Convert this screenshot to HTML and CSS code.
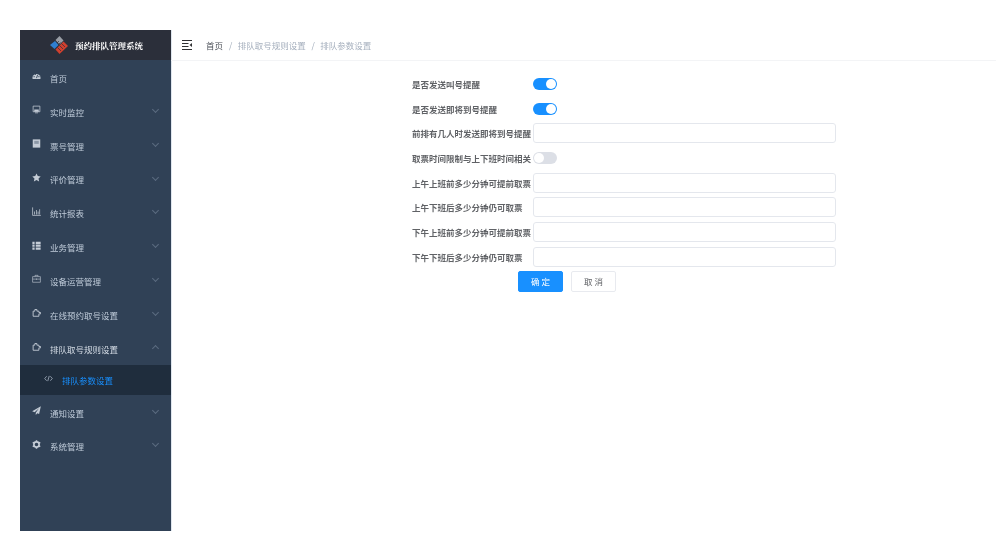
FILE: index.html
```html
<!DOCTYPE html>
<html lang="zh">
<head>
<meta charset="utf-8">
<title>排队参数设置</title>
<link rel="stylesheet" href="styles.css">
</head>
<body>
<div class="app">
  <aside class="sidebar">
    <div class="brand">
      <svg class="logo" viewBox="0 0 20 20"><path d="M10.500 1l4 4.500-4 4-4-4.500z" fill="#9a9ea6"/><path d="M6 6l3.500 4L5.500 14 1 10z" fill="#2f7fd0"/><path d="M6.500 14.500L14.500 6.500 19 11 10.500 19z" fill="#d0402e"/><path d="M8.500 12.500l3.500 3.500M10.500 10.500l3.500 3.500M12.500 8.500l3.500 3.500M8 8l2-2M9.500 9.500l2-2" stroke="#2b2f3a" stroke-width=".7"/></svg>
      <span class="brand-name">预约排队管理系统</span>
    </div>
    <nav class="menu">
      <a class="item"><svg class="ico" viewBox="0 0 12 12"><path d="M.5 9.500a5.500 5.500 0 0 1 11 0c0 .6-.4 1-1 1h-9c-.6 0-1-.4-1-1z" fill="currentColor"/><path d="M6 9.500L7.500 5" stroke="#304156" stroke-width="1.200"/><circle cx="2.800" cy="7.500" r=".8" fill="#304156"/><circle cx="9.200" cy="7.500" r=".8" fill="#304156"/><circle cx="4.500" cy="4.500" r=".7" fill="#304156"/></svg><span class="lbl">首页</span></a>
      <a class="item"><svg class="ico" viewBox="0 0 12 12"><path d="M1.500 1.500h9v7.500h-9z" fill="none" stroke="currentColor"/><path d="M3 6h6v3H3zM4 10h4v1H4z" fill="currentColor"/></svg><span class="lbl">实时监控</span><i class="chev"></i></a>
      <a class="item"><svg class="ico" viewBox="0 0 12 12"><path d="M1 .5h10v11H1z" fill="currentColor"/><path d="M3 2.500h6v4H3z" fill="#8b97a6"/></svg><span class="lbl">票号管理</span><i class="chev"></i></a>
      <a class="item"><svg class="ico" viewBox="0 0 12 12"><path d="M6 .5l1.700 3.600 3.900.5-2.900 2.700.8 3.900L6 9.300l-3.500 1.900.8-3.900L.4 4.600l3.900-.5z" fill="currentColor"/></svg><span class="lbl">评价管理</span><i class="chev"></i></a>
      <a class="item"><svg class="ico" viewBox="0 0 12 12"><path d="M.8 .5v10.700h11" fill="none" stroke="currentColor"/><path d="M3 6h1v4H3zM5.300 4h1v6h-1zM7.600 6h1v4h-1zM9.800 3h1v7h-1z" fill="currentColor"/></svg><span class="lbl">统计报表</span><i class="chev"></i></a>
      <a class="item"><svg class="ico" viewBox="0 0 12 12"><path d="M.5 1h3v3h-3zM.5 4.800h3v3h-3zM.5 8.500h3v3h-3zM5 1h6.500v3H5zM5 4.800h6.500v3H5zM5 8.500h6.500v3H5z" fill="currentColor"/></svg><span class="lbl">业务管理</span><i class="chev"></i></a>
      <a class="item"><svg class="ico" viewBox="0 0 12 12"><path d="M.8 3.500h10.400v7.500H.8zM4 3.500V1.800h4v1.700M.8 6.800h10.400M6 6v1.800" fill="none" stroke="currentColor" stroke-width=".8"/></svg><span class="lbl">设备运营管理</span><i class="chev"></i></a>
      <a class="item"><svg class="ico" viewBox="0 0 12 12"><path d="M1.500 4.200h2.300V2h2.700v2.200h2.700V6h2.300v1.800H9.200v3.200H1.500z" fill="none" stroke="currentColor" stroke-width="1.200"/></svg><span class="lbl">在线预约取号设置</span><i class="chev"></i></a>
      <a class="item open"><svg class="ico" viewBox="0 0 12 12"><path d="M1.500 4.200h2.300V2h2.700v2.200h2.700V6h2.300v1.800H9.200v3.200H1.500z" fill="none" stroke="currentColor" stroke-width="1.200"/></svg><span class="lbl">排队取号规则设置</span><i class="chev up"></i></a>
      <a class="sub"><svg class="sub-ico" viewBox="0 0 12 12"><path d="M3.500 3L1 6l2.500 3M8.500 3L11 6 8.500 9M7 2.500L5 9.500" fill="none" stroke="currentColor" stroke-width=".9"/></svg><span>排队参数设置</span></a>
      <a class="item"><svg class="ico" viewBox="0 0 12 12"><path d="M11.800.2L.2 7l3.300 1.400L9.300 3 5 9v3l2-2.500 2.500 1z" fill="currentColor"/></svg><span class="lbl">通知设置</span><i class="chev"></i></a>
      <a class="item"><svg class="ico" viewBox="0 0 12 12"><circle cx="6" cy="6" r="3.500" fill="none" stroke="currentColor" stroke-width="2.200"/><path d="M6 .2v2M6 9.800v2M1 3.100l1.700 1M9.300 7.900l1.700 1M1 8.900l1.700-1M9.300 4.100l1.700-1" stroke="currentColor" stroke-width="2"/></svg><span class="lbl">系统管理</span><i class="chev"></i></a>
    </nav>
  </aside>
  <main class="main">
    <header class="topbar">
      <svg class="fold" viewBox="0 0 10 10"><path d="M0 .5h10M0 3.500h6.500M0 6.500h6.500M0 9.500h10" stroke="#303133" stroke-width="1.200"/><path d="M10 3v4L7.500 5z" fill="#303133"/></svg>
      <nav class="crumbs">
        <span class="crumb-home">首页</span><span class="sep">/</span><span>排队取号规则设置</span><span class="sep">/</span><span>排队参数设置</span>
      </nav>
    </header>
    <form class="form">
      <div class="row"><label>是否发送叫号提醒</label><span class="switch on"></span></div>
      <div class="row"><label>是否发送即将到号提醒</label><span class="switch on"></span></div>
      <div class="row"><label>前排有几人时发送即将到号提醒</label><span class="input"></span></div>
      <div class="row"><label>取票时间限制与上下班时间相关</label><span class="switch"></span></div>
      <div class="row"><label>上午上班前多少分钟可提前取票</label><span class="input"></span></div>
      <div class="row"><label>上午下班后多少分钟仍可取票</label><span class="input"></span></div>
      <div class="row"><label>下午上班前多少分钟可提前取票</label><span class="input"></span></div>
      <div class="row"><label>下午下班后多少分钟仍可取票</label><span class="input"></span></div>
      <div class="actions"><button type="button" class="btn primary">确 定</button><button type="button" class="btn">取 消</button></div>
    </form>
  </main>
</div>
</body>
</html>
```

FILE: styles.css
```css
* { box-sizing: border-box; }
html, body { margin: 0; height: 100%; background: #fff; overflow: hidden; }
body { font-family: "Noto Sans CJK SC", "Liberation Sans", sans-serif; font-size: 8.5px; padding: 30px 0 29px 20px; }
.app { display: flex; height: 501px; filter: blur(.35px); }
.sidebar { width: 151px; flex: none; background: #304156; box-shadow: 1px 0 0 #dfe6ee; }
.brand { height: 30px; background: #2b2f3a; display: flex; align-items: center; padding-left: 29px; }
.logo { width: 20px; height: 20px; margin-right: 6px; }
.brand-name { color: #fff; font-family: "Noto Serif CJK SC", "Noto Sans CJK SC", serif; font-weight: 700; font-size: 8.5px; }
.menu { display: flex; flex-direction: column; }
.item { height: 33.85px; display: flex; align-items: center; padding-left: 12px; color: #bfcbd9; position: relative; }
.ico { width: 9px; height: 9px; color: #c4ccd6; margin-right: 9px; transform: translateY(-1px); flex: none; }
.lbl { line-height: 12px; transform: translateY(1px); }
.item.open .lbl { color: #d5dde6; }
.chev { position: absolute; right: 13px; top: 13px; width: 5px; height: 5px; border-right: 1px solid #5a6b80; border-bottom: 1px solid #5a6b80; transform: rotate(45deg); }
.chev.up { top: 15px; transform: rotate(-135deg); }
.sub { height: 30px; background: #1f2d3d; display: flex; align-items: center; padding-left: 24px; color: #1890ff; }
.sub-ico { width: 9px; height: 9px; color: #bfcbd9; margin-right: 9px; transform: translateY(-1px); }
.main { flex: 1; min-width: 0; }
.topbar { height: 31px; display: flex; align-items: center; padding-left: 11px; border-bottom: 1px solid #f3f4f6; }
.fold { width: 10px; height: 10px; margin-right: 14px; flex: none; }
.crumbs { display: flex; color: #a5afbd; line-height: 12px; }
.crumb-home { color: #4a4f57; margin-right: .5px; }
.sep { margin: 0 5.5px; color: #a5afbd; }
.form { width: 424px; margin: 13px 0 0 241px; display: flex; flex-direction: column; gap: 4.7px; }
.row { display: flex; align-items: center; height: 20px; }
.row label { width: 121px; flex: none; color: #606266; font-size: 8.5px; line-height: 12px; font-weight: 700; white-space: nowrap; transform: translateY(-.5px); }
.switch { width: 24px; height: 12px; border-radius: 6px; background: #dcdfe6; position: relative; }
.switch::after { content: ""; position: absolute; left: 1px; top: 1px; width: 10px; height: 10px; border-radius: 50%; background: #fff; }
.switch.on { background: #1890ff; }
.switch.on::after { left: 13px; }
.input { width: 303px; height: 20px; border: 1px solid #e4e7ed; border-radius: 3px; background: #fff; }
.actions { display: flex; gap: 8px; margin: -1px 0 0 106px; }
.btn { width: 45px; height: 21px; border: 1px solid #e8eaef; border-radius: 2px; background: #fff; color: #606266; font: inherit; padding: 0; }
.btn.primary { background: #1890ff; border-color: #1890ff; color: #fff; }
```
